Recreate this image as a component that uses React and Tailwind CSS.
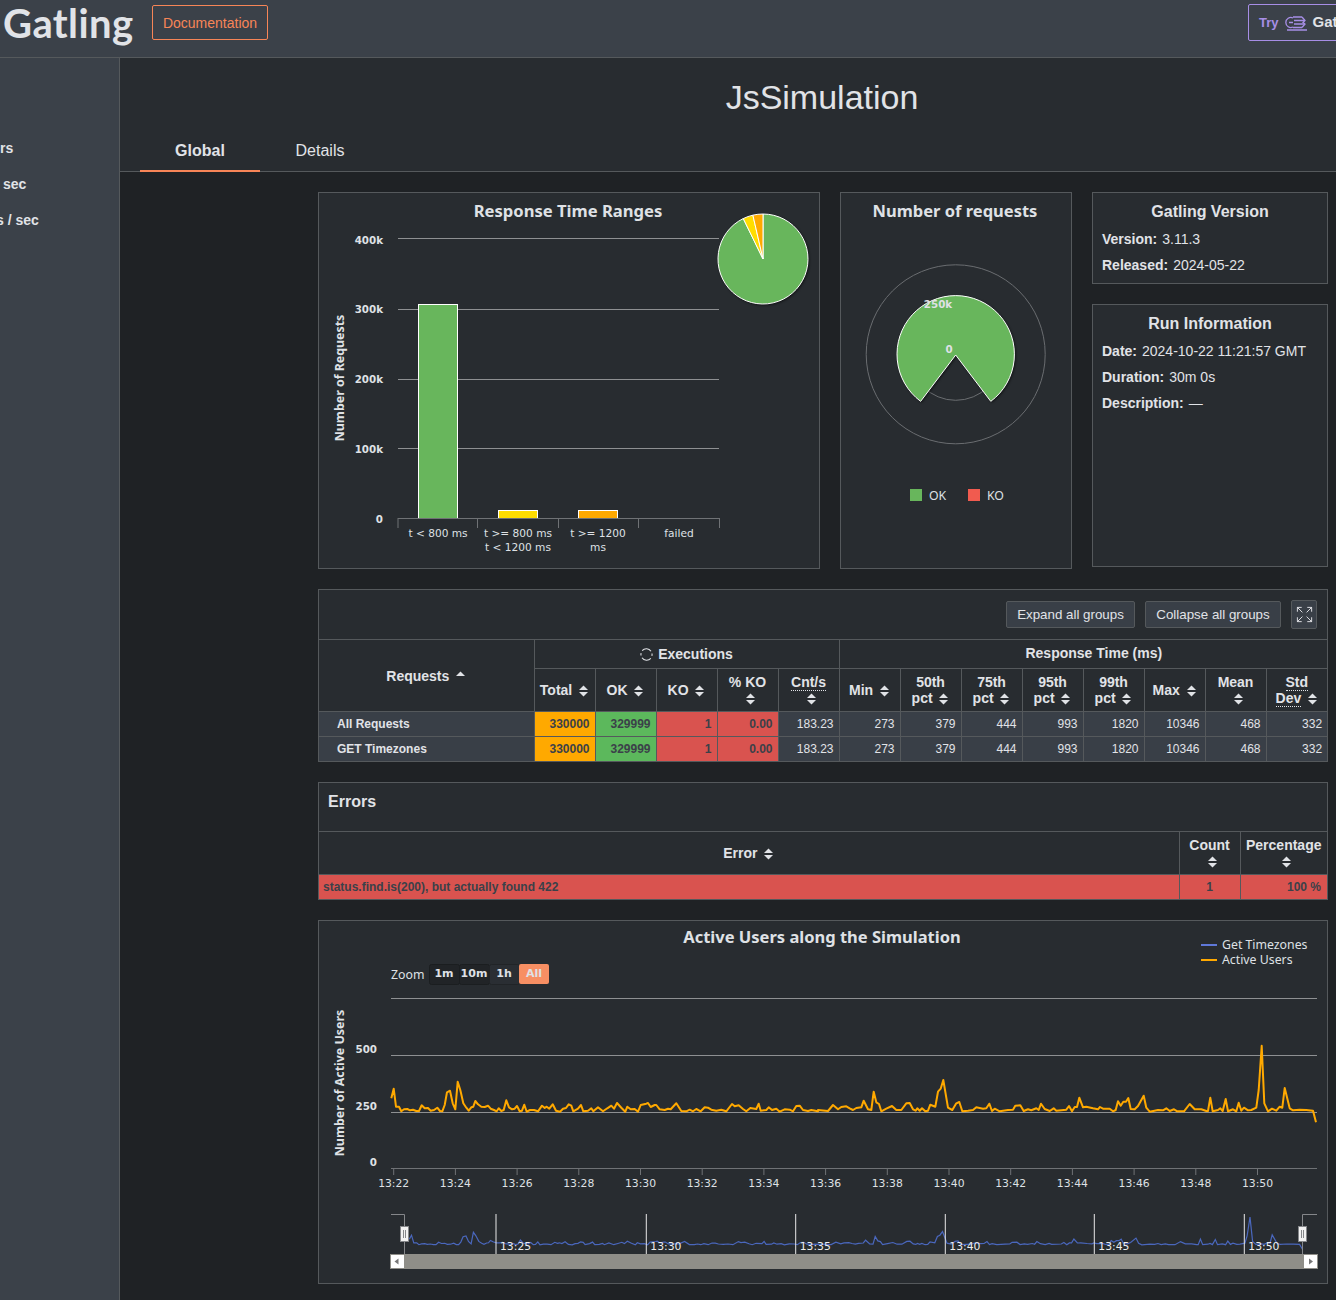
import React from 'react';
import { Expand } from 'lucide-react';

// sampled from the reference, x/y in a 3x crop of each half of the chart
const LEFT = '220,535 227,506 234,560 243,560 250,574 258,568 268,567 276,571 285,569 295,573 303,573 311,556 320,565 330,564 338,572 348,570 358,563 366,573 373,574 380,555 387,517 396,512 404,550 412,568 419,485 427,510 436,550 445,563 452,572 460,562 466,560 472,543 480,553 490,560 500,561 510,557 518,566 528,570 536,574 542,565 550,573 557,570 565,541 573,562 582,568 590,566 597,558 605,574 612,572 619,554 626,575 636,570 648,570 660,574 672,557 680,564 686,560 694,566 704,553 714,572 726,575 735,566 744,564 752,553 760,557 766,574 780,566 789,555 796,574 810,572 820,565 826,574 840,562 855,574 868,565 880,557 888,566 897,549 910,563 922,575 928,560 938,568 950,567 960,575 968,555 985,551 990,549 998,561 1010,555 1015,555 1025,568 1040,570 1050,566 1058,568 1075,550 1090,573 1105,574 1115,569 1125,574 1135,567 1148,574 1160,562 1170,563 1180,569 1195,572 1210,569 1225,574 1242,552 1250,559 1262,556 1275,567 1285,574 1297,564 1315,567 1322,551 1328,572 1345,570 1352,562 1362,570 1375,566 1385,575 1400,568 1415,569 1425,574 1435,558 1445,557 1455,570 1470,573 1480,570 1500,574';
const RIGHT = '0,570 30,573 45,555 60,568 70,561 85,559 95,565 105,570 115,564 130,562 137,542 150,568 160,570 167,515 175,547 183,552 190,574 205,566 222,558 235,570 250,570 265,550 275,549 285,568 293,572 298,565 305,572 312,565 322,574 330,572 337,554 352,560 360,515 368,506 376,480 390,563 403,570 415,550 424,546 433,574 450,572 465,570 475,562 495,566 505,565 514,551 522,573 530,566 545,574 570,570 585,569 592,557 607,556 617,573 630,568 640,571 655,565 662,570 669,551 680,567 695,573 707,565 715,572 745,569 753,558 762,574 770,561 777,561 784,533 795,562 805,560 825,565 840,568 846,561 855,566 875,566 885,574 893,570 900,544 908,557 916,545 924,545 931,534 938,567 950,568 960,558 977,527 985,563 995,575 1020,570 1035,571 1045,565 1055,573 1068,568 1078,574 1098,574 1115,552 1130,568 1150,568 1165,573 1170,573 1177,533 1184,574 1200,570 1207,565 1214,573 1223,537 1230,574 1245,568 1255,574 1262,548 1270,572 1278,563 1290,571 1300,570 1315,563 1322,510 1331,377 1339,550 1350,574 1362,566 1375,572 1385,560 1393,563 1400,504 1415,565 1425,571 1445,569 1465,570 1485,572 1494,607';

const parse = (s, ox) => s.split(' ').map((p) => {
  const [x, y] = p.split(',').map(Number);
  return [ox + x / 3, 920 + y / 3];
});
const users = [...parse(LEFT, 318), ...parse(RIGHT, 818)];
const usersLine = users.map(([x, y]) => `${x.toFixed(1)},${y.toFixed(1)}`).join(' ');
const navLine = users
  .map(([x, y]) => `${(408 + (x - 390) * 0.966).toFixed(1)},${Math.min(1253, 1245 + (y - 1112) * 0.42).toFixed(1)}`)
  .join(' ');

const polar = (cx, cy, r, deg) => {
  const a = (deg * Math.PI) / 180;
  return `${(cx + r * Math.sin(a)).toFixed(2)} ${(cy - r * Math.cos(a)).toFixed(2)}`;
};
const slice = (cx, cy, r, from, to) => {
  const large = to - from > 180 ? 1 : 0;
  return `M${cx} ${cy} L${polar(cx, cy, r, from)} A${r} ${r} 0 ${large} 1 ${polar(cx, cy, r, to)} Z`;
};

const SortIcon = ({ up = true, down = true, below = false }) => (
  <svg
    width="9"
    height="12"
    viewBox="0 0 9 12"
    className={`${below ? 'ml-[6px]' : 'ml-[3px] mr-[1px]'} inline-block align-[-2px] fill-[#e1e3e7]`}
  >
    {up && <path d="M4.5 0.5 L9 5 H0 Z" />}
    {down && <path d="M0 7 H9 L4.5 11.5 Z" />}
  </svg>
);

const Dotted = ({ children }) => <span className="border-b border-dotted border-[#e1e3e7]">{children}</span>;

const titleFont = "font-['Noto_Sans']";

const ResponseTimeChart = () => {
  const grid = [238.5, 309.5, 379.5, 448.5];
  const yLabels = [['400k', 244], ['300k', 313], ['200k', 383], ['100k', 453], ['0', 523]];
  return (
    <svg viewBox="319 193 500 375" className="block w-full h-full overflow-visible font-['DejaVu_Sans'] fill-[#dfe1e5]">
      <text x="568" y="217" textAnchor="middle" fontSize="16.6" fontWeight="700" className={titleFont}>Response Time Ranges</text>
      {grid.map((y) => <line key={y} x1="398" x2="719" y1={y} y2={y} stroke="#8e9092" />)}
      {yLabels.map(([t, y]) => <text key={t} x="383" y={y} textAnchor="end" fontSize="10.3" fontWeight="700">{t}</text>)}
      <text transform="translate(344 378) rotate(-90)" textAnchor="middle" fontSize="12.4" fontWeight="700" className={titleFont}>Number of Requests</text>
      <rect x="418.5" y="304.5" width="39" height="214" fill="#68b65c" stroke="#fff" />
      <rect x="498.5" y="510.5" width="39" height="8" fill="#ffdd00" stroke="#fff" />
      <rect x="578.5" y="510.5" width="39" height="8" fill="#ffa900" stroke="#fff" />
      <path d="M398 518.5 H719.5 M398 518 V528 M477.5 518 V528 M558.5 518 V528 M638.5 518 V528 M719.5 518 V528" stroke="#6f7275" fill="none" />
      <g fontSize="10.6" textAnchor="middle">
        <text x="438" y="537">t &lt; 800 ms</text>
        <text x="518" y="537">t &gt;= 800 ms</text>
        <text x="518" y="551">t &lt; 1200 ms</text>
        <text x="598" y="537">t &gt;= 1200</text>
        <text x="598" y="551">ms</text>
        <text x="679" y="537">failed</text>
      </g>
      <g stroke="#fff" strokeWidth="1" className="drop-shadow-[1px_1px_1px_rgba(0,0,0,0.5)]">
        <path d={slice(763, 259, 45, 0, 334)} fill="#68b65c" />
        <path d={slice(763, 259, 45, 334, 347)} fill="#ffdd00" />
        <path d={slice(763, 259, 45, 347, 360)} fill="#ffa900" />
      </g>
    </svg>
  );
};

const RequestsChart = () => (
  <svg viewBox="841 193 230 375" className="block w-full h-full font-['DejaVu_Sans'] fill-[#dfe1e5]">
    <text x="955" y="217" textAnchor="middle" fontSize="16.5" fontWeight="700" className={titleFont}>Number of requests</text>
    <circle cx="955.7" cy="354.3" r="89.5" fill="none" stroke="#6a6d70" />
    <circle cx="955.7" cy="354.3" r="46" fill="none" stroke="#6a6d70" />
    <path
      d={`M955.7 355 L${polar(955.7, 354.3, 58.7, 216.7)} A58.7 58.7 0 1 1 ${polar(955.7, 354.3, 58.7, 143.3)} Z`}
      fill="#68b65c"
      stroke="#fff"
      className="drop-shadow-[1px_1px_1px_rgba(0,0,0,0.5)]"
    />
    <text x="938" y="308" textAnchor="middle" fontSize="10.3" fontWeight="700">250k</text>
    <text x="949" y="353" textAnchor="middle" fontSize="10.3" fontWeight="700">0</text>
    <rect x="910" y="489" width="12" height="12" fill="#68b65c" />
    <text x="929" y="500" fontSize="12.3" className={titleFont}>OK</text>
    <rect x="968" y="489" width="12" height="12" fill="#f15b4f" />
    <text x="987" y="500" fontSize="12.3" className={titleFont}>KO</text>
  </svg>
);

const UsersChart = () => {
  const ticks = [393.7, 455.4, 517.1, 578.8, 640.5, 702.2, 763.9, 825.6, 887.3, 949, 1010.7, 1072.4, 1134.1, 1195.8, 1257.5];
  const labels = ['13:22', '13:24', '13:26', '13:28', '13:30', '13:32', '13:34', '13:36', '13:38', '13:40', '13:42', '13:44', '13:46', '13:48', '13:50'];
  const navTicks = [[496, '13:25'], [646.3, '13:30'], [795.7, '13:35'], [945.3, '13:40'], [1094.3, '13:45'], [1244.3, '13:50']];
  return (
    <svg viewBox="319 921 1008 362" className="block w-full h-full font-['DejaVu_Sans'] fill-[#dfe1e5]">
      <text x="822" y="943" textAnchor="middle" fontSize="16.5" fontWeight="700" className={titleFont}>Active Users along the Simulation</text>

      <line x1="1201" x2="1217" y1="945" y2="945" stroke="#5f78d8" strokeWidth="2" />
      <text x="1222" y="949" fontSize="12.3" className={titleFont}>Get Timezones</text>
      <line x1="1201" x2="1217" y1="960" y2="960" stroke="#ffa900" strokeWidth="2" />
      <text x="1222" y="964" fontSize="12.3" className={titleFont}>Active Users</text>

      <text x="391" y="979" fontSize="12.3" className={titleFont}>Zoom</text>
      <rect x="429.5" y="964.5" width="30" height="20" rx="2" fill="#212427" stroke="#1b1e20" />
      <rect x="459.5" y="964.5" width="30" height="20" rx="2" fill="#212427" stroke="#1b1e20" />
      <rect x="489.5" y="964.5" width="30" height="20" rx="2" fill="#2a2e33" stroke="#212427" />
      <rect x="519" y="964" width="30" height="20" rx="2" fill="#f78f63" />
      <g fontSize="11" fontWeight="700" textAnchor="middle">
        <text x="444" y="977">1m</text>
        <text x="474" y="977">10m</text>
        <text x="504" y="977">1h</text>
        <text x="534" y="977">All</text>
      </g>

      {[998.5, 1055.5, 1112.5].map((y) => <line key={y} x1="391" x2="1317" y1={y} y2={y} stroke="#8e9092" />)}
      <g fontSize="10.3" fontWeight="700" textAnchor="end">
        <text x="377" y="1053">500</text>
        <text x="377" y="1110">250</text>
        <text x="377" y="1166">0</text>
      </g>
      <text transform="translate(344 1083) rotate(-90)" textAnchor="middle" fontSize="12.4" fontWeight="700" className={titleFont}>Number of Active Users</text>

      <polyline points={usersLine} fill="none" stroke="#ffa900" strokeWidth="2" strokeLinejoin="round" />

      <line x1="391" x2="1317" y1="1168.5" y2="1168.5" stroke="#6f7275" />
      {ticks.map((x, i) => (
        <g key={x}>
          <line x1={x} x2={x} y1="1168" y2="1175" stroke="#6f7275" />
          <text x={x} y="1187" textAnchor="middle" fontSize="10.8">{labels[i]}</text>
        </g>
      ))}

      <polyline points={navLine} fill="none" stroke="#4a67bd" strokeWidth="1.2" />
      {navTicks.map(([x, t]) => (
        <g key={t}>
          <line x1={x} x2={x} y1="1214" y2="1254" stroke="#e8e8e8" />
          <text x={x + 4} y="1250" fontSize="10.8" className="fill-[#eeeeee]">{t}</text>
        </g>
      ))}
      <path d="M391 1214.5 H404.5 V1254 M1317 1214.5 H1302.5 V1254" fill="none" stroke="#85878a" />
      <rect x="390" y="1254" width="928" height="15" fill="#8f8e88" />
      <rect x="390.5" y="1254.5" width="14" height="14" fill="#fff" stroke="#8f8e88" />
      <path d="M398.5 1258.5 V1264.5 L394.5 1261.5 Z" fill="#777" />
      <rect x="1303.5" y="1254.5" width="14" height="14" fill="#fff" stroke="#8f8e88" />
      <path d="M1309 1258.5 V1264.5 L1313 1261.5 Z" fill="#777" />
      {[400.5, 1298.5].map((x) => (
        <g key={x}>
          <rect x={x} y="1226.5" width="8" height="15" fill="#f2f2f2" stroke="#85878a" />
          <path d={`M${x + 3} 1230 V1238 M${x + 5} 1230 V1238`} stroke="#85878a" />
        </g>
      ))}
    </svg>
  );
};

const thClass = 'border border-[#55595c] px-[5px] text-center text-sm font-bold leading-[16px] text-[#e1e3e7]';
const headCols = [
  [<>Total <SortIcon /></>],
  [<>OK <SortIcon /></>],
  [<>KO <SortIcon /></>],
  [<>% KO<br /><SortIcon below /></>],
  [<><Dotted>Cnt/s</Dotted><br /><SortIcon below /></>],
  [<>Min <SortIcon /></>],
  [<>50th<br />pct <SortIcon /></>],
  [<>75th<br />pct <SortIcon /></>],
  [<>95th<br />pct <SortIcon /></>],
  [<>99th<br />pct <SortIcon /></>],
  [<>Max <SortIcon /></>],
  [<>Mean<br /><SortIcon below /></>],
  [<><Dotted>Std</Dotted><br /><Dotted>Dev</Dotted> <SortIcon /></>],
];
const rows = ['All Requests', 'GET Timezones'];
const values = ['183.23', '273', '379', '444', '993', '1820', '10346', '468', '332'];
const cellClass = 'border border-[#55595c] pr-[5px] text-right text-xs';

const StatsTable = () => (
  <div className="border border-[#55595c] bg-[#282c30]">
    <div className="flex h-[50px] items-center justify-end gap-[10px] border-b border-[#55595c] pr-[10px]">
      <button className="h-[27px] w-[129px] rounded-[2px] border border-[#55595c] bg-[#393f47] text-[13.33px] text-[#e1e3e7]">Expand all groups</button>
      <button className="h-[27px] w-[136px] rounded-[2px] border border-[#55595c] bg-[#393f47] text-[13.33px] text-[#e1e3e7]">Collapse all groups</button>
      <button className="flex h-[29px] w-[26px] items-center justify-center rounded-[2px] border border-[#55595c] bg-[#393f47] text-[#e1e3e7]">
        <Expand size={19} strokeWidth={1.2} />
      </button>
    </div>
    <table className="w-full table-fixed border-collapse border-hidden">
      <colgroup>
        <col className="w-[215px]" />
        {headCols.map((_, i) => <col key={i} className="w-[61px]" />)}
      </colgroup>
      <thead>
        <tr className="h-[28px]">
          <th rowSpan={2} className={`${thClass} !pt-[2px]`}>Requests <SortIcon down={false} /></th>
          <th colSpan={5} className={`${thClass} !pt-[2px]`}>
            <span className="inline-flex items-center gap-[5px]">
              <svg width="13" height="13" viewBox="0 0 13 13" fill="none" stroke="#e1e3e7" strokeWidth="1.1">
                <path d="M2.2 2.6 A5.6 5.6 0 0 1 11 3.2" />
                <path d="M10.8 10.4 A5.6 5.6 0 0 1 2 9.8" />
                <path d="M1 7.5 A5.6 5.6 0 0 1 1.1 5.2" />
                <path d="M12 5.5 A5.6 5.6 0 0 1 11.9 7.8" />
              </svg>
              Executions
            </span>
          </th>
          <th colSpan={8} className={`${thClass} !pb-[2px] !pl-[26px]`}>Response Time (ms)</th>
        </tr>
        <tr className="h-[43px]">
          {headCols.map(([c], i) => <th key={i} className={thClass}>{c}</th>)}
        </tr>
      </thead>
      <tbody>
        {rows.map((name) => (
          <tr key={name} className="h-[25px] bg-[#393f47] text-[#e1e3e7]">
            <td className="border border-[#55595c] pl-[18px] text-xs font-bold">{name}</td>
            <td className={`${cellClass} bg-[#ffa900] font-bold text-[#3b4149]`}>330000</td>
            <td className={`${cellClass} bg-[#5cb85c] font-bold text-[#3b4149]`}>329999</td>
            <td className={`${cellClass} bg-[#d9534f] font-bold text-[#3b4149]`}>1</td>
            <td className={`${cellClass} bg-[#d9534f] font-bold text-[#3b4149]`}>0.00</td>
            {values.map((v, i) => <td key={i} className={cellClass}>{v}</td>)}
          </tr>
        ))}
      </tbody>
    </table>
  </div>
);

const ErrorsTable = () => (
  <div className="border border-[#55595c] bg-[#282c30]">
    <div className="h-[49px] border-b border-[#55595c] pl-[9px] pt-[7px] text-base font-bold text-[#e1e3e7]">Errors</div>
    <table className="w-full table-fixed border-collapse border-hidden">
      <colgroup>
        <col />
        <col className="w-[61px]" />
        <col className="w-[87px]" />
      </colgroup>
      <thead>
        <tr className="h-[42px]">
          <th className={thClass}>Error <SortIcon /></th>
          <th className={thClass}>Count<br /><SortIcon below /></th>
          <th className={`${thClass} !px-0`}>Percentage<br /><SortIcon below /></th>
        </tr>
      </thead>
      <tbody>
        <tr className="h-[25px] bg-[#d9534f] text-xs text-[#3b4149]">
          <td className="border border-[#55595c] pl-[4px] font-bold">status.find.is(200), but actually found 422</td>
          <td className="border border-[#55595c] text-center font-bold">1</td>
          <td className="border border-[#55595c] pr-[6px] text-right font-bold">100 %</td>
        </tr>
      </tbody>
    </table>
  </div>
);

const InfoCard = ({ title, items, className }) => (
  <div className={`border border-[#55595c] bg-[#282c30] px-[9px] pt-[8px] ${className}`}>
    <h3 className="mb-[3px] text-center text-base font-bold leading-[22px] text-[#e1e3e7]">{title}</h3>
    {items.map(([k, v]) => (
      <div key={k} className="flex h-[26px] items-center gap-[5px] text-sm text-[#e1e3e7]">
        <span className="font-bold">{k}</span>
        <span>{v}</span>
      </div>
    ))}
  </div>
);

const App = () => {
  return (
    <div className="flex h-[1300px] w-[1336px] flex-col overflow-hidden bg-[#1f2225] font-['Liberation_Sans',Arial,sans-serif] text-[#e1e3e7]">
      {/* top bar */}
      <header className="flex h-[58px] shrink-0 items-start border-b border-[#55595c] bg-[#3b4149]">
        <div className="ml-[3px] w-[149px] font-['Lato',sans-serif] text-[40px] font-bold leading-[46px] tracking-[0.4px] text-[#e1e3e7]">Gatling</div>
        <a className="mt-[5px] flex h-[35px] w-[116px] items-center justify-center rounded-[2px] border border-[#f78557] text-sm text-[#f78557]">Documentation</a>
        <a className="ml-auto mr-[-120px] mt-[4px] flex h-[37px] w-[208px] items-center gap-[5px] rounded-[2px] border border-[#a78ee6] pl-[10px]">
          <span className="text-[13px] font-bold text-[#a78ee6]">Try</span>
          <svg width="24" height="16" viewBox="0 0 24 16" fill="none" stroke="#a78ee6" strokeWidth="1.3">
            <path d="M9 3 A5 5 0 1 0 9 12" />
            <path d="M5 7.5 H9 M9 2 H18 M10 5.5 H21 M10 9 H21 M9 12.5 H18 M3 15 H23" />
            <path d="M18 2 L21 5.5 L19 7.5 L21 9 L18 12.5" />
          </svg>
          <span className="text-[15px] font-bold text-[#e1e3e7]">Gatling Enterprise</span>
        </a>
      </header>

      <div className="flex flex-1">
        {/* sidebar, scrolled sideways in the capture */}
        <aside className="w-[120px] shrink-0 border-r border-[#55595c] bg-[#3b4149] pt-[72px] text-sm font-bold text-[#e1e3e7]">
          <div className="flex h-9 items-center">rs</div>
          <div className="flex h-9 items-center pl-[3px]">sec</div>
          <div className="-ml-1 flex h-9 items-center">s / sec</div>
        </aside>

        <main className="flex min-w-0 flex-1 flex-col">
          <section className="h-[114px] border-b border-[#55595c] bg-[#282c30]">
            <div className="pl-[198px] pr-[10px] pt-[19px] text-center text-[34px] leading-[40px] text-[#e1e3e7]">JsSimulation</div>
            <nav className="ml-5 mt-[13px] flex">
              <div className="flex h-[42px] w-[120px] items-center justify-center border-b-2 border-[#f78557] pt-[2px] text-base font-bold">Global</div>
              <div className="flex h-[42px] w-[120px] items-center justify-center text-base">Details</div>
            </nav>
          </section>

          <div className="flex flex-col gap-5 pl-[198px] pr-2 pt-5">
            <div className="flex h-[377px] gap-5">
              <div className="w-[502px] border border-[#55595c] bg-[#282c30]"><ResponseTimeChart /></div>
              <div className="w-[232px] border border-[#55595c] bg-[#282c30]"><RequestsChart /></div>
              <div className="flex w-[236px] flex-col gap-5">
                <InfoCard className="h-[92px]" title="Gatling Version" items={[['Version:', '3.11.3'], ['Released:', '2024-05-22']]} />
                <InfoCard
                  className="h-[263px]"
                  title="Run Information"
                  items={[['Date:', '2024-10-22 11:21:57 GMT'], ['Duration:', '30m 0s'], ['Description:', '—']]}
                />
              </div>
            </div>
            <StatsTable />
            <ErrorsTable />
            <div className="h-[364px] border border-[#55595c] bg-[#282c30]"><UsersChart /></div>
          </div>
        </main>
      </div>
    </div>
  );
};

export default App;
